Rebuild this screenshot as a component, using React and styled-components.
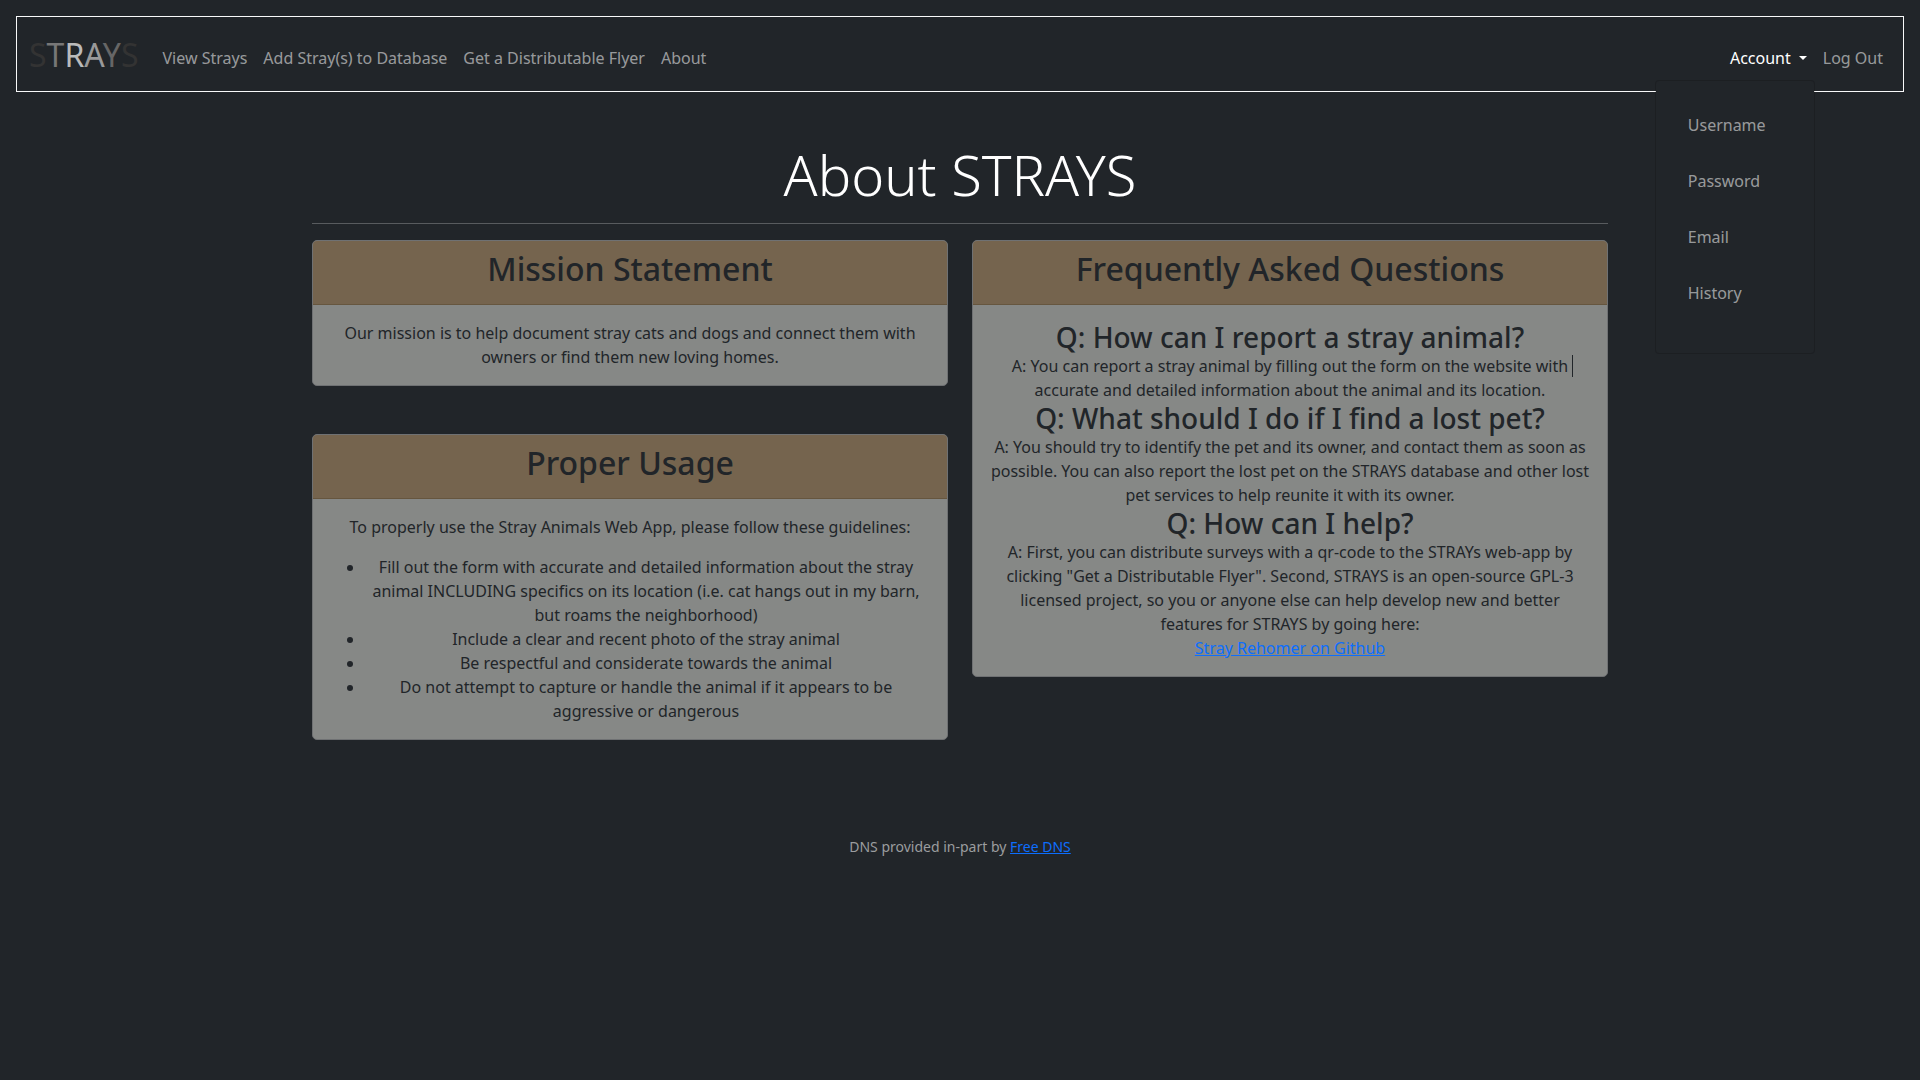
import React from "react";
import styled, { createGlobalStyle } from "styled-components";

const GlobalStyle = createGlobalStyle`
  *, *::before, *::after { box-sizing: border-box; }
  body {
    margin: 0;
    background: #212529;
    color: #212529;
    font-family: "Noto Sans", "Liberation Sans", sans-serif;
    font-size: 16px;
    line-height: 24px;
  }
  h1, h2, h3, p, ul { margin: 0; padding: 0; }
`;

const Navbar = styled.nav`
  display: flex;
  align-items: center;
  margin: 16px;
  padding: 14px 12px 12px;
  border: 1px solid #f8f9fa;
`;

const Brand = styled.a`
  margin-right: 16px;
  font-size: 32px;
  line-height: 48px;
  text-decoration: none;
  white-space: nowrap;
`;

const Letter = styled.span`
  color: ${(p) => p.$tone};
`;

const NavList = styled.ul`
  display: flex;
  list-style: none;
  margin-top: 6px;
  margin-left: ${(p) => (p.$end ? "auto" : 0)};
`;

const NavItem = styled.li`
  position: relative;
`;

const NavLink = styled.a`
  display: block;
  padding: 8px;
  color: rgba(255, 255, 255, 0.55);
  text-decoration: none;
  white-space: nowrap;
`;

const Toggle = styled.button`
  display: block;
  padding: 8px;
  border: 0;
  background: none;
  color: #fff;
  font: inherit;
  white-space: nowrap;

  &::after {
    content: "";
    display: inline-block;
    margin-left: 8px;
    vertical-align: 4px;
    border-top: 4px solid;
    border-right: 4px solid transparent;
    border-left: 4px solid transparent;
  }
`;

const Menu = styled.ul`
  position: absolute;
  top: 100%;
  right: 0;
  z-index: 10;
  min-width: 160px;
  margin-top: 2px;
  padding: 16px 16px 32px;
  list-style: none;
  background: #212529;
  background-clip: padding-box;
  border: 1px solid rgba(0, 0, 0, 0.15);
  border-radius: 4px;
`;

const MenuItem = styled.li`
  padding: 8px;
`;

const Container = styled.main`
  max-width: 1320px;
  margin: 48px auto 0;
  padding: 0 12px;
`;

const Title = styled.h1`
  color: #fff;
  font-size: 56px;
  font-weight: 300;
  line-height: 68px;
  text-align: center;
`;

const Divider = styled.hr`
  height: 1px;
  margin: 15px 0 16px;
  border: 0;
  background: #585b5e;
`;

const Columns = styled.div`
  display: grid;
  grid-template-columns: 1fr 1fr;
  align-items: start;
  gap: 24px;
`;

const Stack = styled.div`
  display: grid;
  gap: 48px;
`;

const Card = styled.section`
  overflow: hidden;
  background: #868886;
  border: 1px solid #6f7173;
  border-radius: 5px;
  text-align: center;
`;

const CardHeader = styled.header`
  padding: 8px 16px 16px;
  background: #75644e;
  border-bottom: 1px solid #66563f;
`;

const CardTitle = styled.h2`
  font-size: 32px;
  font-weight: 500;
  line-height: 39px;
`;

const CardBody = styled.div`
  padding: 16px;
`;

const Bullets = styled.ul`
  && {
    margin-top: 16px;
    padding-left: 32px;
    list-style: none;
  }
`;

const Bullet = styled.li`
  position: relative;

  &::before {
    content: "";
    position: absolute;
    top: 10px;
    left: -14px;
    width: 6px;
    height: 6px;
    border-radius: 50%;
    background: #212529;
  }
`;

const Question = styled.h3`
  font-size: 28px;
  font-weight: 500;
  line-height: 33px;
`;

const TextLink = styled.a`
  color: #0d6efd;
  text-decoration: underline;
`;

const TextCursor = styled.span`
  position: relative;

  &::after {
    content: "";
    position: absolute;
    top: 0;
    left: 4px;
    width: 1px;
    height: 22px;
    background: #212529;
  }
`;

const Footer = styled.footer`
  margin-top: 96px;
  color: #9b9d9f;
  font-size: 14px;
  line-height: 21px;
  text-align: center;
`;

const brandLetters = [
  ["S", "#333333"],
  ["T", "#777777"],
  ["R", "#bbbbbb"],
  ["A", "#999999"],
  ["Y", "#666666"],
  ["S", "#333333"],
];

const pages = ["View Strays", "Add Stray(s) to Database", "Get a Distributable Flyer", "About"];
const accountPages = ["Username", "Password", "Email", "History"];

const guidelines = [
  "Fill out the form with accurate and detailed information about the stray animal INCLUDING specifics on its location (i.e. cat hangs out in my barn, but roams the neighborhood)",
  "Include a clear and recent photo of the stray animal",
  "Be respectful and considerate towards the animal",
  "Do not attempt to capture or handle the animal if it appears to be aggressive or dangerous",
];

function InfoCard({ title, children }) {
  return (
    <Card>
      <CardHeader>
        <CardTitle>{title}</CardTitle>
      </CardHeader>
      <CardBody>{children}</CardBody>
    </Card>
  );
}

export default function App() {
  return (
    <>
      <GlobalStyle />
      <Navbar>
        <Brand href="#" aria-label="STRAYS">
          {brandLetters.map(([letter, tone], i) => (
            <Letter key={i} $tone={tone}>{letter}</Letter>
          ))}
        </Brand>
        <NavList>
          {pages.map((page) => (
            <NavItem key={page}>
              <NavLink href="#">{page}</NavLink>
            </NavItem>
          ))}
        </NavList>
        <NavList $end>
          <NavItem>
            <Toggle type="button" aria-haspopup="true" aria-expanded="true">Account</Toggle>
            <Menu>
              {accountPages.map((page) => (
                <MenuItem key={page}>
                  <NavLink href="#">{page}</NavLink>
                </MenuItem>
              ))}
            </Menu>
          </NavItem>
          <NavItem>
            <NavLink href="#">Log Out</NavLink>
          </NavItem>
        </NavList>
      </Navbar>

      <Container>
        <Title>About STRAYS</Title>
        <Divider />
        <Columns>
          <Stack>
            <InfoCard title="Mission Statement">
              <p>
                Our mission is to help document stray cats and dogs and connect them with owners or
                find them new loving homes.
              </p>
            </InfoCard>
            <InfoCard title="Proper Usage">
              <p>To properly use the Stray Animals Web App, please follow these guidelines:</p>
              <Bullets>
                {guidelines.map((text) => (
                  <Bullet key={text}>{text}</Bullet>
                ))}
              </Bullets>
            </InfoCard>
          </Stack>
          <InfoCard title="Frequently Asked Questions">
            <Question>Q: How can I report a stray animal?</Question>
            <p>
              A: You can report a stray animal by filling out the form on the website with
              <TextCursor /> accurate and detailed information about the animal and its location.
            </p>
            <Question>Q: What should I do if I find a lost pet?</Question>
            <p>
              A: You should try to identify the pet and its owner, and contact them as soon as
              possible. You can also report the lost pet on the STRAYS database and other lost pet
              services to help reunite it with its owner.
            </p>
            <Question>Q: How can I help?</Question>
            <p>
              A: First, you can distribute surveys with a qr-code to the STRAYs web-app by clicking
              "Get a Distributable Flyer". Second, STRAYS is an open-source GPL-3 licensed project,
              so you or anyone else can help develop new and better features for STRAYS by going
              here:
              <br />
              <TextLink href="#">Stray Rehomer on Github</TextLink>
            </p>
          </InfoCard>
        </Columns>
      </Container>

      <Footer>
        DNS provided in-part by <TextLink href="#">Free DNS</TextLink>
      </Footer>
    </>
  );
}
